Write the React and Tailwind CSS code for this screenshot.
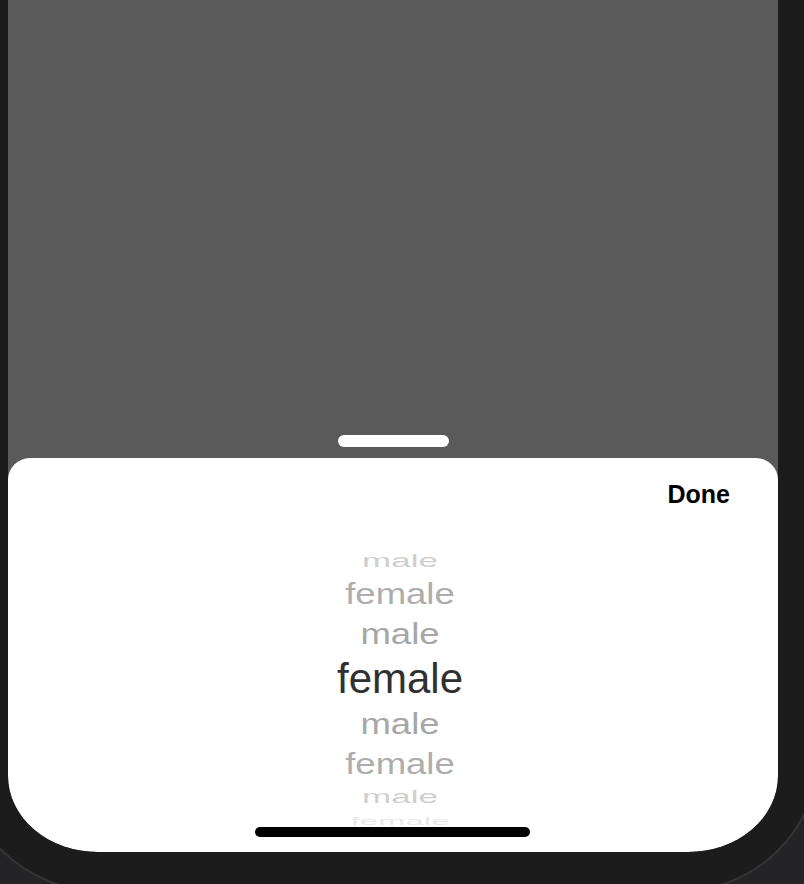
import React from 'react';

const rows = [
  { label: 'male', h: 'h-[32px]', size: 'text-[35px]', scale: 'scale-y-[0.55]', color: 'text-[#cfcfcf]' },
  { label: 'female', h: 'h-[36px]', size: 'text-[36.5px]', scale: 'scale-y-[0.8]', color: 'text-[#adadad]' },
  { label: 'male', h: 'h-[44px]', size: 'text-[36.5px]', scale: 'scale-y-[0.82]', color: 'text-[#a6a6a6]' },
  { label: 'female', h: 'h-[46px]', size: 'text-[42px]', scale: 'scale-y-100', color: 'text-[#303030]' },
  { label: 'male', h: 'h-[44px]', size: 'text-[36.5px]', scale: 'scale-y-[0.82]', color: 'text-[#a6a6a6]' },
  { label: 'female', h: 'h-[36px]', size: 'text-[36.5px]', scale: 'scale-y-[0.8]', color: 'text-[#adadad]' },
  { label: 'male', h: 'h-[28px]', size: 'text-[35px]', scale: 'scale-y-[0.55]', color: 'text-[#cfcfcf]' },
  { label: 'female', h: 'h-[20px]', size: 'text-[33px]', scale: 'scale-y-[0.35]', color: 'text-[#e8e8e8]' },
];

const App = () => {
  return (
    <div className="relative w-[804px] h-[884px] overflow-hidden bg-[#242426] font-['Liberation_Sans',Arial,sans-serif]">
      {/* phone body */}
      <div className="absolute left-[-40px] right-[-16px] top-[-200px] bottom-[-8px] rounded-b-[140px] bg-[#1c1c1c] border-2 border-[#343434]" />

      <div className="relative ml-[8px] w-[770px] h-[852px] bg-[#5a5a5a] rounded-b-[90px_76px] overflow-hidden flex flex-col">
        <div className="flex-1 flex items-end justify-center pb-[11px]">
          <div className="w-[111px] h-[12px] rounded-full bg-white" />
        </div>

        <div className="relative h-[394px] bg-white rounded-t-[22px] rounded-b-[90px_76px] overflow-hidden">
          <div className="flex justify-end pt-[24px] pr-[48px]">
            <span className="text-[25px] leading-none font-bold text-black">Done</span>
          </div>

          <div className="mt-[37px] pl-[14px] flex flex-col items-center">
            {rows.map((row, idx) => (
              <div key={idx} className={`${row.h} flex items-center justify-center overflow-visible`}>
                <span className={`${row.size} ${row.scale} ${row.color} leading-none whitespace-nowrap`}>
                  {row.label}
                </span>
              </div>
            ))}
          </div>

          <div className="absolute left-[247px] bottom-[15px] w-[275px] h-[10px] rounded-full bg-black" />
        </div>
      </div>
    </div>
  );
};

export default App;
